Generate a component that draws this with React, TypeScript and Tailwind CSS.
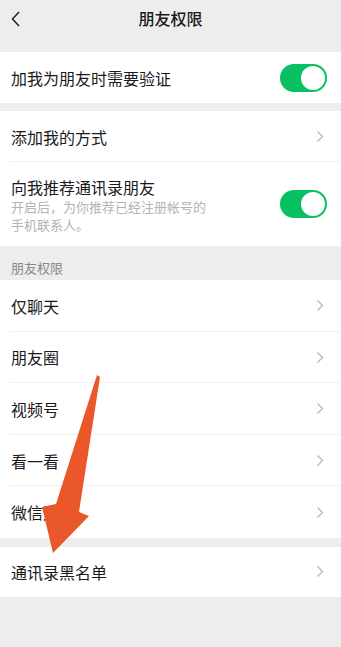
import React from "react";

const font = { fontFamily: '"Noto Sans CJK SC", "Noto Sans", sans-serif' };

function Chevron() {
  return (
    <svg width="8" height="13" viewBox="0 0 8 13" className="shrink-0">
      <path d="M1.5 1.5 L6.5 6.5 L1.5 11.5" fill="none" stroke="#b8b8b8" strokeWidth="1.4" />
    </svg>
  );
}

function Toggle() {
  return (
    <div className="w-[47px] h-[28px] rounded-full bg-[#07c160] flex items-center justify-end pr-[2px]">
      <div className="w-[24px] h-[24px] rounded-full bg-white" />
    </div>
  );
}

function Row({ label, last }: { label: string; last?: boolean }) {
  return (
    <div className="relative h-[51.6px] flex items-center justify-between pl-[11px] pr-[17px]">
      <span className="text-[16px] text-[#1a1a1a]">{label}</span>
      <Chevron />
      {!last && <div className="absolute left-[10px] right-0 bottom-0 h-px bg-[#f0f0f0]" />}
    </div>
  );
}

export default function App() {
  const friendRows = ["仅聊天", "朋友圈", "视频号", "看一看", "微信运动"];

  return (
    <div className="relative w-[341px] h-[647px] bg-[#ededed] overflow-hidden" style={font}>
      {/* nav bar */}
      <div className="relative h-[36px] flex items-center justify-center">
        <svg width="10" height="16" viewBox="0 0 10 16" className="absolute left-[11px] top-[11px]">
          <path d="M8 1 L1.5 8 L8 15" fill="none" stroke="#222" strokeWidth="1.5" />
        </svg>
        <span className="text-[16px] font-medium text-[#191919]">朋友权限</span>
      </div>
      <div className="h-[16px]" />

      <div className="bg-white h-[51px] flex items-center justify-between pl-[11px] pr-[14px]">
        <span className="text-[16px] text-[#1a1a1a]">加我为朋友时需要验证</span>
        <Toggle />
      </div>

      <div className="h-[8px]" />

      <div className="bg-white">
        <div className="relative h-[51px] flex items-center justify-between pl-[11px] pr-[17px]">
          <span className="text-[16px] text-[#1a1a1a]">添加我的方式</span>
          <Chevron />
          <div className="absolute left-[10px] right-0 bottom-0 h-px bg-[#f0f0f0]" />
        </div>
        <div className="h-[84px] flex items-center justify-between pl-[11px] pr-[14px]">
          <div className="flex flex-col pt-[2px]">
            <span className="text-[16px] leading-[22px] text-[#1a1a1a]">向我推荐通讯录朋友</span>
            <span className="text-[13px] leading-[18px] text-[#b4b4b4] w-[205px]">
              开启后，为你推荐已经注册帐号的手机联系人。
            </span>
          </div>
          <Toggle />
        </div>
      </div>

      <div className="h-[34px] flex items-end pl-[11px] pb-[3px]">
        <span className="text-[13px] text-[#888888]">朋友权限</span>
      </div>

      <div className="bg-white">
        {friendRows.map((r, i) => (
          <Row key={r} label={r} last={i === friendRows.length - 1} />
        ))}
      </div>

      <div className="h-[9px]" />

      <div className="bg-white h-[50px] flex items-center justify-between pl-[11px] pr-[17px]">
        <span className="text-[16px] text-[#1a1a1a]">通讯录黑名单</span>
        <Chevron />
      </div>

      {/* annotation arrow */}
      <svg
        className="absolute left-0 top-0 pointer-events-none"
        width="341"
        height="647"
        viewBox="0 0 341 647"
      >
        <polygon
          points="97,375 100,377 79,512 89,516 53,553 42,507 56,504"
          fill="#e9572b"
        />
      </svg>
    </div>
  );
}
